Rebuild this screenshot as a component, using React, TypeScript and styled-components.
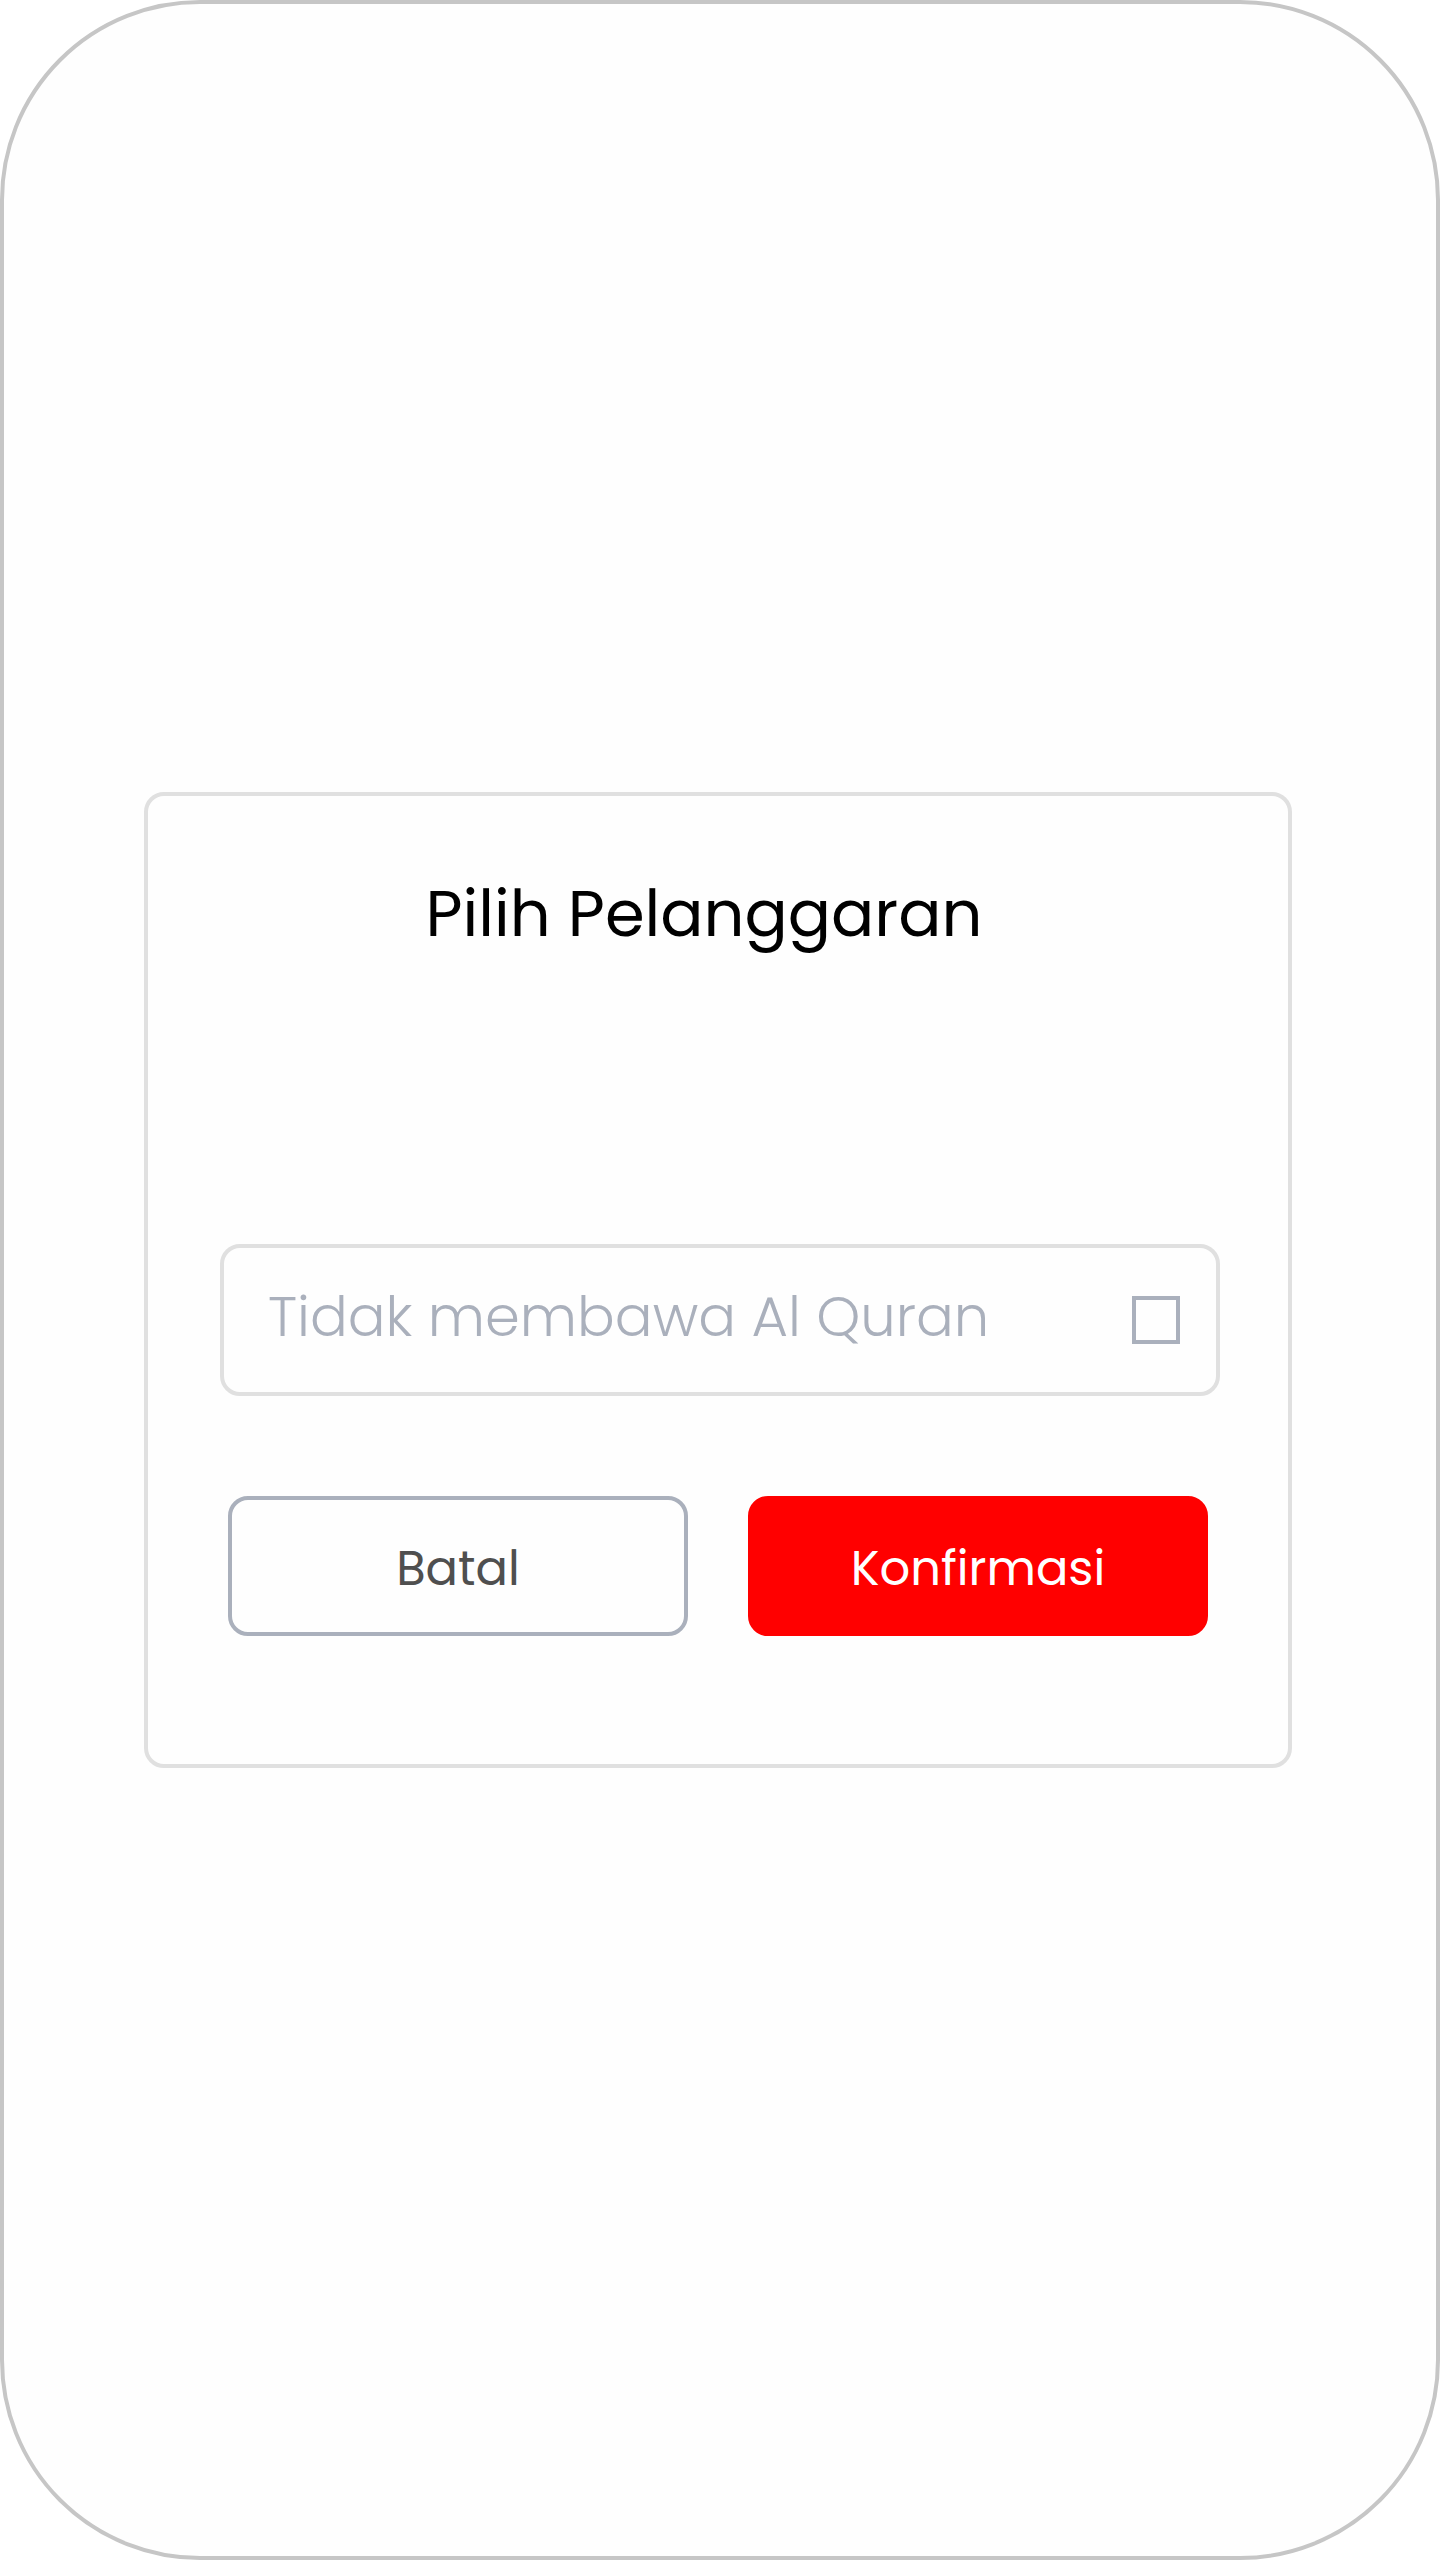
import React, { useState } from "react";
import styled, { createGlobalStyle } from "styled-components";

const GlobalStyle = createGlobalStyle`
  *, *::before, *::after { box-sizing: border-box; }
  body {
    margin: 0;
    background: #ffffff;
    font-family: Poppins, Inter, "Open Sans", sans-serif;
  }
`;

const Screen = styled.main`
  display: flex;
  align-items: center;
  min-height: 100vh;
  padding: 40px 144px 40px 140px;
  background: #fefefe;
  border: 4px solid #c6c6c6;
  border-radius: 200px;
`;

const Dialog = styled.form`
  display: flex;
  flex: 1;
  flex-direction: column;
  padding: 70px 68px 128px 72px;
  border: 4px solid #e0e0e0;
  border-radius: 20px;
`;

const Title = styled.h1`
  margin: 0 32px 282px 0;
  color: #000000;
  font-size: 64px;
  font-weight: 400;
  line-height: 96px;
  text-align: center;
`;

const Option = styled.label`
  display: flex;
  align-items: center;
  justify-content: space-between;
  gap: 24px;
  min-height: 152px;
  padding: 0 36px 6px 44px;
  border: 4px solid #e0e0e0;
  border-radius: 20px;
  color: #aab0bc;
  font-size: 56px;
  font-weight: 300;
  line-height: 84px;
`;

const Tick = styled.input`
  flex: none;
  width: 48px;
  height: 48px;
  margin: 6px 0 0;
  appearance: none;
  border: 4px solid #aab0bc;
  background: transparent;

  &:checked {
    background: #aab0bc;
  }
`;

const Actions = styled.div`
  display: grid;
  grid-template-columns: 1fr 1fr;
  gap: 60px;
  margin: 100px 12px 0 8px;
`;

const Button = styled.button<{ $primary?: boolean }>`
  min-height: 140px;
  padding: 6px 24px 0;
  border: 4px solid ${(p) => (p.$primary ? "#ff0000" : "#aab0bc")};
  border-radius: 20px;
  background: ${(p) => (p.$primary ? "#ff0000" : "transparent")};
  color: ${(p) => (p.$primary ? "#ffffff" : "#4f4f4f")};
  font-family: inherit;
  font-size: 48px;
  font-weight: 400;
  line-height: 72px;
`;

export default function App() {
  const [checked, setChecked] = useState(false);

  return (
    <>
      <GlobalStyle />
      <Screen>
        <Dialog onSubmit={(e) => e.preventDefault()}>
          <Title>Pilih Pelanggaran</Title>
          <Option htmlFor="no-quran">
            Tidak membawa Al Quran
            <Tick
              id="no-quran"
              type="checkbox"
              checked={checked}
              onChange={(e) => setChecked(e.target.checked)}
            />
          </Option>
          <Actions>
            <Button type="button" onClick={() => setChecked(false)}>
              Batal
            </Button>
            <Button type="submit" $primary>
              Konfirmasi
            </Button>
          </Actions>
        </Dialog>
      </Screen>
    </>
  );
}
